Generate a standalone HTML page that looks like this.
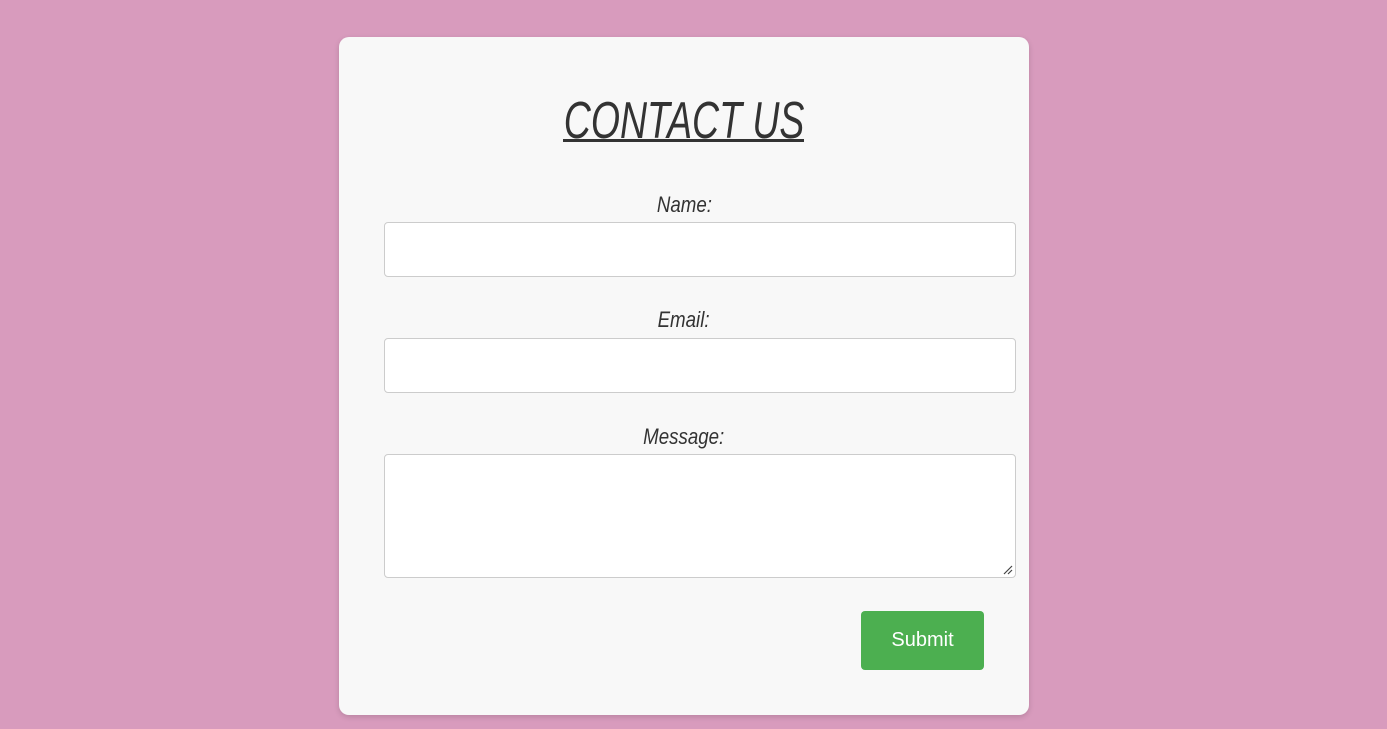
<!DOCTYPE html>
<html><head><style>
body{margin:0;width:1387px;height:729px;background:#d89bbd;position:relative;overflow:hidden;font-family:"Liberation Sans",sans-serif}
.card{position:absolute;left:339px;top:37px;width:690px;height:678px;background:#f8f8f8;border-radius:10px;box-shadow:0 2px 6px rgba(0,0,0,.15)}
.t{position:absolute;left:0;width:100%;text-align:center;color:#333;font-style:italic}
.title{top:54px;height:60px}
.title span{display:inline-block;font-size:52px;line-height:60px;transform:scaleX(.72);transform-origin:center}
.ul{position:absolute;left:224px;top:102px;width:241px;height:3px;background:#333}
.lab span{display:inline-block;font-size:22px;transform:scaleX(.85)}
.in{position:absolute;left:45px;width:630px;background:#fff;border:1px solid #ccc;border-radius:4px}
.btn{position:absolute;left:522px;top:574px;width:123px;height:59px;background:#4caf50;border-radius:4px;color:#fff;font-size:20px;text-align:center;line-height:58px}
</style></head><body>
<div class="card">
<div class="t title"><span>CONTACT US</span></div>
<div class="ul"></div>
<div class="t lab" style="top:155px"><span>Name:</span></div>
<div class="in" style="top:185px;height:53px"></div>
<div class="t lab" style="top:270px"><span>Email:</span></div>
<div class="in" style="top:301px;height:53px"></div>
<div class="t lab" style="top:387px"><span>Message:</span></div>
<div class="in" style="top:417px;height:122px"><svg style="position:absolute;right:2px;bottom:2px" width="10" height="10"><path d="M9 1L1 9M9 5L5 9" stroke="#444" stroke-width="1.2"/></svg></div>
<div class="btn">Submit</div>
</div>
</body></html>
